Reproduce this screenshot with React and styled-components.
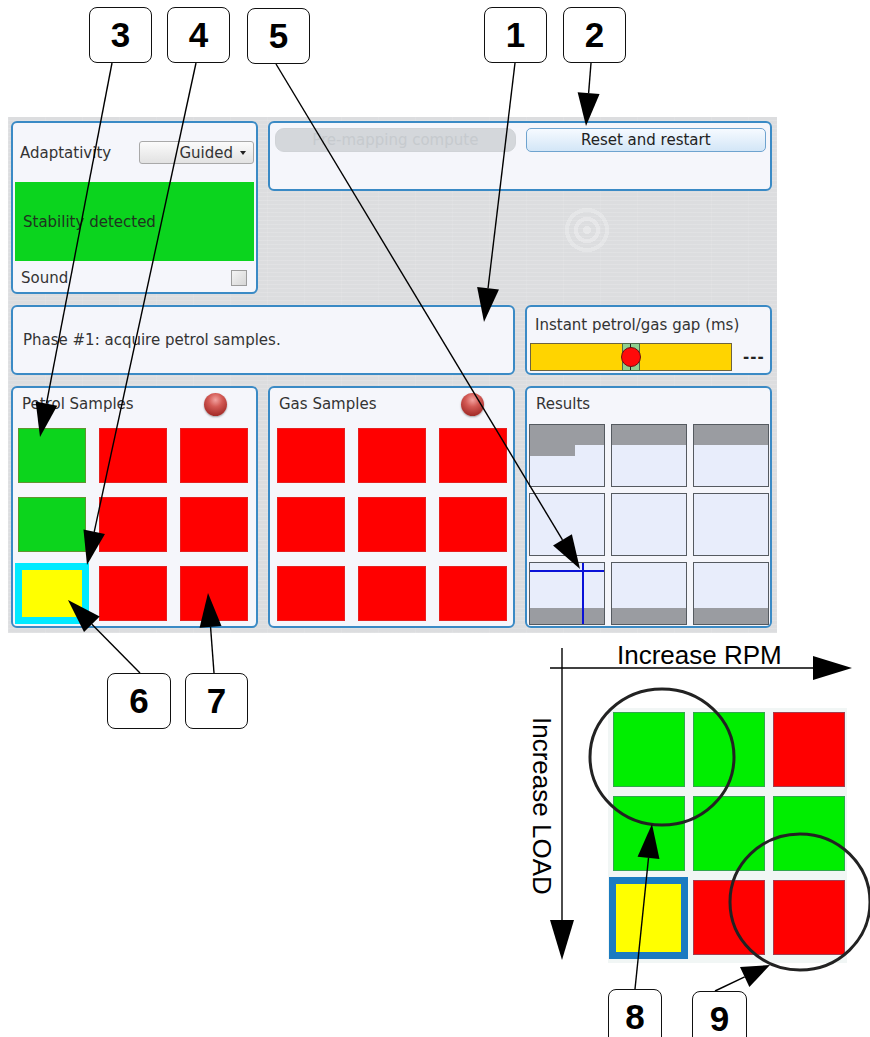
import React from "react";
import styled, { createGlobalStyle } from "styled-components";

const GlobalStyle = createGlobalStyle`
  html, body {
    margin: 0;
    padding: 0;
    background: #ffffff;
  }
  * {
    box-sizing: border-box;
  }
`;

const Page = styled.div`
  position: relative;
  width: 870px;
  height: 1037px;
  overflow: hidden;
  padding: 117px 0 0 8px;
  background: #ffffff;
  font-family: "DejaVu Sans", "Liberation Sans", sans-serif;
  color: #333;
`;

const Screen = styled.div`
  width: 769px;
  height: 516px;
  padding: 4px 0 0 3px;
  display: grid;
  grid-template-columns: 247px 247px 247px;
  grid-template-rows: 173px 70px 242px;
  column-gap: 10px;
  row-gap: 11px;
  background-color: #dcdddf;
  background-image:
    radial-gradient(circle at 579px 113px, rgba(255,255,255,.3) 0 4px, transparent 4px 9px, rgba(255,255,255,.28) 9px 13px, transparent 13px 18px, rgba(255,255,255,.24) 18px 22px, transparent 22px),
    repeating-linear-gradient(0deg, rgba(255,255,255,.14) 0 1px, transparent 1px 4px),
    repeating-linear-gradient(90deg, rgba(255,255,255,.08) 0 1px, transparent 1px 37px);
`;

const Panel = styled.section`
  grid-column: ${(p) => p.$col || "auto"};
  grid-row: ${(p) => p.$row || "auto"};
  align-self: ${(p) => (p.$short ? "start" : "stretch")};
  height: ${(p) => (p.$short ? "70px" : "auto")};
  border: 2px solid #3a8ac5;
  border-radius: 6px;
  background: #f5f6fb;
  display: flex;
  flex-direction: column;
  overflow: hidden;
`;

const Text = styled.span`
  font-size: 15px;
  color: #333;
`;

const ModeRow = styled.div`
  height: 59px;
  padding: 0 2px 0 7px;
  display: flex;
  align-items: center;
  justify-content: space-between;
`;

const Dropdown = styled.div`
  width: 115px;
  height: 23px;
  border: 1px solid #a9a9a9;
  border-radius: 3px;
  background: linear-gradient(#fbfbfb, #e2e2e2);
  display: flex;
  align-items: center;
  justify-content: flex-end;
  gap: 7px;
  padding-right: 7px;
  font-size: 15px;
  color: #333;

  &::after {
    content: "";
    border-left: 3px solid transparent;
    border-right: 3px solid transparent;
    border-top: 4px solid #222;
  }
`;

const Stability = styled.div`
  height: 79px;
  margin: 0 2px;
  padding-left: 8px;
  background: #0bd41e;
  display: flex;
  align-items: center;
  font-size: 15px;
  color: #1f3320;
`;

const SoundRow = styled.div`
  flex: 1;
  padding: 3px 9px 0 8px;
  display: flex;
  align-items: center;
  justify-content: space-between;
`;

const Checkbox = styled.div`
  width: 16px;
  height: 16px;
  border: 1px solid #9c9c9c;
  background: linear-gradient(135deg, #f4f4f4, #d6d6d6);
`;

const ButtonRow = styled.div`
  padding: 5px 4px 0 5px;
  display: flex;
  gap: 10px;
`;

const Button = styled.div`
  flex: 1;
  height: 24px;
  display: flex;
  align-items: center;
  justify-content: center;
  font-size: 15px;
  border-radius: ${(p) => (p.$disabled ? "9px" : "5px")};
  border: 1px solid ${(p) => (p.$disabled ? "#d0d3d7" : "#6ea3cf")};
  color: ${(p) => (p.$disabled ? "#c6cace" : "#222")};
  background: ${(p) =>
    p.$disabled ? "#d4d7db" : "linear-gradient(#f6faff, #d3e6f7)"};
`;

const Message = styled.div`
  flex: 1;
  padding-left: 10px;
  display: flex;
  align-items: center;
`;

const GapLabel = styled.div`
  padding: 8px 0 0 8px;
  height: 34px;
`;

const GapRow = styled.div`
  padding: 2px 0 0 3px;
  display: flex;
  align-items: center;
  gap: 11px;
`;

const Bar = styled.div`
  position: relative;
  width: 202px;
  height: 28px;
  background: #ffd400;
  border: 1px solid #6d6340;
`;

const Marker = styled.div`
  position: absolute;
  left: 91px;
  top: -1px;
  width: 18px;
  height: 28px;
  background: #8fd08f;
  border: 1px solid #4b6a4b;

  &::before {
    content: "";
    position: absolute;
    left: 7px;
    top: 0;
    width: 1px;
    height: 100%;
    background: #222;
  }

  &::after {
    content: "";
    position: absolute;
    left: -2px;
    top: 3px;
    width: 18px;
    height: 18px;
    border-radius: 50%;
    background: #ff0a0a;
    border: 1px solid #6a1010;
  }
`;

const Dashes = styled.span`
  font-size: 15px;
  font-weight: bold;
  color: #222;
  letter-spacing: 1px;
`;

const SamplesHead = styled.div`
  height: ${(p) => p.$h}px;
  padding: 0 29px ${(p) => p.$h - 32}px 9px;
  display: flex;
  align-items: center;
  justify-content: space-between;
  flex-shrink: 0;
`;

const Led = styled.div`
  width: 23px;
  height: 23px;
  border-radius: 50%;
  background: radial-gradient(circle at 50% 30%, #f3a3a0 0, #d35a55 35%, #a8302c 75%, #8c2623 100%);
  box-shadow: 0 1px 2px rgba(0, 0, 0, 0.35);
`;

const SampleGrid = styled.div`
  padding-left: ${(p) => p.$inset}px;
  display: grid;
  grid-template-columns: repeat(3, 68px);
  grid-template-rows: repeat(3, 55px);
  column-gap: 13px;
  row-gap: 14px;
`;

const SampleCell = styled.div`
  background: ${(p) => p.$color};
  border: ${(p) =>
    p.$selected ? "7px solid #00eaff" : "1px solid rgba(200, 70, 70, 0.45)"};
  margin: ${(p) => (p.$selected ? "-3px" : "0")};
`;

const ResultGrid = styled.div`
  padding-left: 2px;
  display: grid;
  grid-template-columns: repeat(3, 76px);
  grid-template-rows: repeat(3, 63px);
  gap: 6px;
`;

const band = "#9a9ca1";

const ResultCell = styled.div`
  border: 1px solid #555a60;
  background-color: #e8edfb;
  background-repeat: no-repeat;
  background-image: ${(p) =>
    [
      p.$cross && "linear-gradient(#0a12d8, #0a12d8)",
      p.$cross && "linear-gradient(#0a12d8, #0a12d8)",
      p.$step && `linear-gradient(${band}, ${band})`,
      p.$top && `linear-gradient(${band}, ${band})`,
      p.$bottom && `linear-gradient(${band}, ${band})`,
    ]
      .filter(Boolean)
      .join(", ") || "none"};
  background-position: ${(p) =>
    [
      p.$cross && "0 7px",
      p.$cross && "52px 0",
      p.$step && "0 0",
      p.$top && "0 0",
      p.$bottom && "0 100%",
    ]
      .filter(Boolean)
      .join(", ") || "0 0"};
  background-size: ${(p) =>
    [
      p.$cross && "100% 2px",
      p.$cross && "2px 100%",
      p.$step && "45px 31px",
      p.$top && "100% 20px",
      p.$bottom && "100% 16px",
    ]
      .filter(Boolean)
      .join(", ") || "auto"};
`;

const Diagram = styled.div`
  width: 370px;
  height: 397px;
  margin: 7px 0 0 492px;
  display: grid;
  grid-template-columns: 108px 239px;
  grid-template-rows: 68px 255px;
  font-family: "Liberation Sans", Arial, sans-serif;
  color: #000;
`;

const AxisLabel = styled.div`
  font-size: 26px;
  line-height: 30px;
  white-space: nowrap;
  justify-self: start;
  align-self: start;
  grid-column: ${(p) => (p.$vertical ? 1 : 2)};
  grid-row: ${(p) => (p.$vertical ? 2 : 1)};
  writing-mode: ${(p) => (p.$vertical ? "vertical-rl" : "horizontal-tb")};
  padding: ${(p) => (p.$vertical ? "9px 0 0 0" : "0 0 0 9px")};
  margin-left: ${(p) => (p.$vertical ? "27px" : "0")};
`;

const MapGrid = styled.div`
  grid-column: 2;
  grid-row: 2;
  padding: 4px 0 0 5px;
  background: #f1f6f5;
  display: grid;
  grid-template-columns: repeat(3, 72px);
  grid-template-rows: repeat(3, 75px);
  column-gap: 8px;
  row-gap: 9px;
`;

const MapCell = styled.div`
  background: ${(p) => p.$color};
  border: ${(p) =>
    p.$selected ? "7px solid #1b7bc1" : "1px solid rgba(90, 110, 140, 0.55)"};
  margin: ${(p) => (p.$selected ? "-3px -3px -4px -4px" : "0")};
`;

const Overlay = styled.svg`
  position: absolute;
  left: 0;
  top: 0;
  pointer-events: none;
  z-index: 2;
`;

const Callout = styled.div`
  position: absolute;
  left: ${(p) => p.$x}px;
  top: ${(p) => p.$y}px;
  width: ${(p) => p.$w}px;
  height: 56px;
  z-index: 3;
  background: #fff;
  border: 1.5px solid #111;
  border-radius: 8px;
  display: flex;
  align-items: center;
  justify-content: center;
  font-family: "Liberation Sans", Arial, sans-serif;
  font-weight: bold;
  font-size: 35px;
  color: #000;
`;

const GREEN = "#0cd41c";
const RED = "#ff0000";

const petrol = [GREEN, RED, RED, GREEN, RED, RED, "yellow", RED, RED];
const gas = Array(9).fill(RED);
const results = [
  { top: true, step: true },
  { top: true },
  { top: true },
  {},
  {},
  {},
  { bottom: true, cross: true },
  { bottom: true },
  { bottom: true },
];
const map = ["#00ee00", "#00ee00", RED, "#00ee00", "#00ee00", "#00ee00", "#ffff00", RED, RED];

const callouts = [
  { n: 3, x: 89, y: 7, w: 63 },
  { n: 4, x: 167, y: 7, w: 63 },
  { n: 5, x: 247, y: 8, w: 63 },
  { n: 1, x: 484, y: 7, w: 63 },
  { n: 2, x: 563, y: 7, w: 63 },
  { n: 6, x: 107, y: 673, w: 64 },
  { n: 7, x: 185, y: 673, w: 63 },
  { n: 8, x: 608, y: 989, w: 54 },
  { n: 9, x: 692, y: 991, w: 55 },
];

const arrows = [
  [112, 63, 40, 437],
  [196, 63, 87, 565],
  [276, 64, 580, 569],
  [515, 63, 484, 322],
  [591, 63, 586, 126, 33, 11],
  [140, 673, 68, 600],
  [214, 673, 208, 593],
  [635, 989, 652, 824],
  [715, 991, 770, 965, 28, 11],
  [550, 668, 852, 668, 39, 12],
  [562, 648, 562, 960, 40, 12],
];

function Arrow({ a }) {
  const [x1, y1, x2, y2, len = 34, w = 11] = a;
  const dx = x2 - x1;
  const dy = y2 - y1;
  const d = Math.hypot(dx, dy);
  const ux = dx / d;
  const uy = dy / d;
  const bx = x2 - ux * len;
  const by = y2 - uy * len;
  const pts = `${x2},${y2} ${bx - uy * w},${by + ux * w} ${bx + uy * w},${by - ux * w}`;
  return (
    <g>
      <line x1={x1} y1={y1} x2={bx} y2={by} stroke="#000" strokeWidth="1.4" />
      <polygon points={pts} fill="#000" />
    </g>
  );
}

export default function App() {
  return (
    <Page>
      <GlobalStyle />
      <Screen>
        <Panel $col="1" $row="1">
          <ModeRow>
            <Text>Adaptativity</Text>
            <Dropdown>Guided</Dropdown>
          </ModeRow>
          <Stability>Stability detected</Stability>
          <SoundRow>
            <Text>Sound</Text>
            <Checkbox />
          </SoundRow>
        </Panel>

        <Panel $col="2 / 4" $row="1" $short>
          <ButtonRow>
            <Button $disabled>Pre-mapping compute</Button>
            <Button>Reset and restart</Button>
          </ButtonRow>
        </Panel>

        <Panel $col="1 / 3" $row="2">
          <Message>
            <Text>Phase #1: acquire petrol samples.</Text>
          </Message>
        </Panel>

        <Panel $col="3" $row="2">
          <GapLabel>
            <Text>Instant petrol/gas gap (ms)</Text>
          </GapLabel>
          <GapRow>
            <Bar>
              <Marker />
            </Bar>
            <Dashes>---</Dashes>
          </GapRow>
        </Panel>

        <Panel $col="1" $row="3">
          <SamplesHead $h={40}>
            <Text>Petrol Samples</Text>
            <Led />
          </SamplesHead>
          <SampleGrid $inset={5}>
            {petrol.map((c, i) => (
              <SampleCell key={i} $color={c} $selected={c === "yellow"} />
            ))}
          </SampleGrid>
        </Panel>

        <Panel $col="2" $row="3">
          <SamplesHead $h={40}>
            <Text>Gas Samples</Text>
            <Led />
          </SamplesHead>
          <SampleGrid $inset={7}>
            {gas.map((c, i) => (
              <SampleCell key={i} $color={c} />
            ))}
          </SampleGrid>
        </Panel>

        <Panel $col="3" $row="3">
          <SamplesHead $h={36}>
            <Text>Results</Text>
          </SamplesHead>
          <ResultGrid>
            {results.map((r, i) => (
              <ResultCell
                key={i}
                $top={r.top}
                $step={r.step}
                $bottom={r.bottom}
                $cross={r.cross}
              />
            ))}
          </ResultGrid>
        </Panel>
      </Screen>

      <Diagram>
        <AxisLabel>Increase RPM</AxisLabel>
        <AxisLabel $vertical>Increase LOAD</AxisLabel>
        <MapGrid>
          {map.map((c, i) => (
            <MapCell key={i} $color={c} $selected={c === "#ffff00"} />
          ))}
        </MapGrid>
      </Diagram>

      <Overlay width="870" height="1037" viewBox="0 0 870 1037">
        <ellipse cx="662" cy="757" rx="72" ry="68" fill="none" stroke="#222" strokeWidth="3" />
        <ellipse cx="800" cy="902" rx="70" ry="68" fill="none" stroke="#222" strokeWidth="3" />
        {arrows.map((a, i) => (
          <Arrow key={i} a={a} />
        ))}
      </Overlay>

      {callouts.map((c) => (
        <Callout key={c.n} $x={c.x} $y={c.y} $w={c.w}>
          {c.n}
        </Callout>
      ))}
    </Page>
  );
}
